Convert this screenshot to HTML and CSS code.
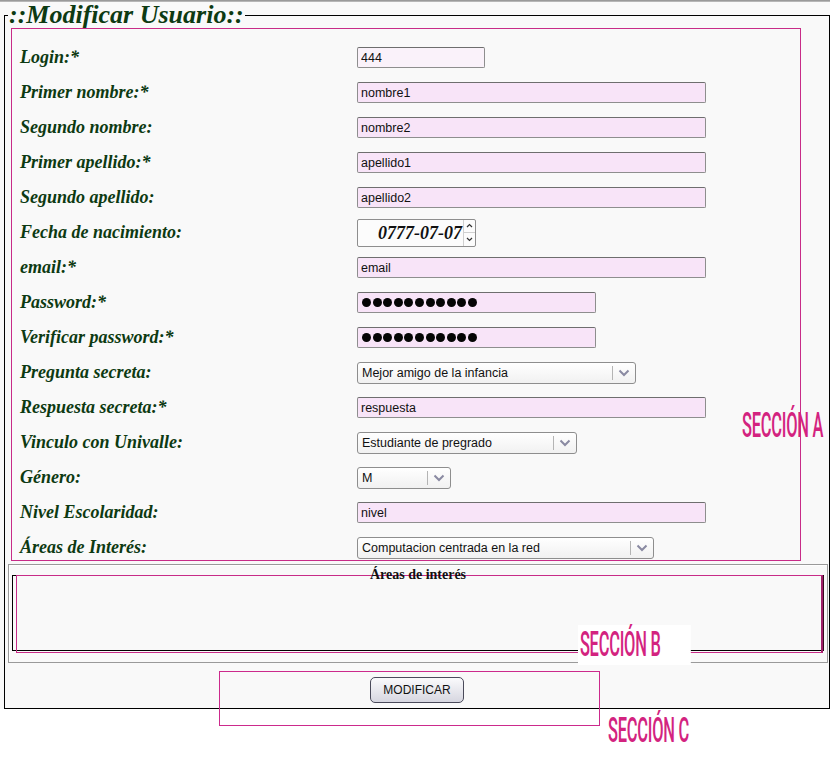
FILE: index.html
```html
<!DOCTYPE html>
<html lang="es">
<head>
<meta charset="utf-8">
<title>Modificar Usuario</title>
<link rel="stylesheet" href="styles.css">
</head>
<body>
<div class="topbar"></div>
<div class="page">
  <fieldset class="main">
    <legend class="title">::Modificar Usuario::</legend>
    <div class="secA">
      <div class="row"><span class="lbl">Login:*</span><input class="txt login" value="444"></div>
      <div class="row"><span class="lbl">Primer nombre:*</span><input class="txt wide" value="nombre1"></div>
      <div class="row"><span class="lbl">Segundo nombre:</span><input class="txt wide" value="nombre2"></div>
      <div class="row"><span class="lbl">Primer apellido:*</span><input class="txt wide" value="apellido1"></div>
      <div class="row"><span class="lbl">Segundo apellido:</span><input class="txt wide" value="apellido2"></div>
      <div class="row"><span class="lbl">Fecha de nacimiento:</span>
        <div class="date"><span class="dval">0777-07-07</span>
          <span class="spin">
            <span class="sp"><svg width="7" height="5" viewBox="0 0 7 5"><path d="M1 4 L3.5 1.5 L6 4" fill="none" stroke="#333" stroke-width="1.2"/></svg></span>
            <span class="sp sp2"><svg width="7" height="5" viewBox="0 0 7 5"><path d="M1 1 L3.5 3.5 L6 1" fill="none" stroke="#333" stroke-width="1.2"/></svg></span>
          </span>
        </div>
      </div>
      <div class="row"><span class="lbl">email:*</span><input class="txt wide" value="email"></div>
      <div class="row"><span class="lbl">Password:*</span>
        <div class="txt pw"><span class="dot"></span><span class="dot"></span><span class="dot"></span><span class="dot"></span><span class="dot"></span><span class="dot"></span><span class="dot"></span><span class="dot"></span><span class="dot"></span><span class="dot"></span><span class="dot"></span></div>
      </div>
      <div class="row"><span class="lbl">Verificar password:*</span>
        <div class="txt pw"><span class="dot"></span><span class="dot"></span><span class="dot"></span><span class="dot"></span><span class="dot"></span><span class="dot"></span><span class="dot"></span><span class="dot"></span><span class="dot"></span><span class="dot"></span><span class="dot"></span></div>
      </div>
      <div class="row"><span class="lbl">Pregunta secreta:</span>
        <div class="sel s-preg"><span class="sv">Mejor amigo de la infancia</span><span class="arr"><svg width="12" height="8" viewBox="0 0 12 8"><path d="M1.5 1.5 L6 6 L10.5 1.5" fill="none" stroke="#8a8aa2" stroke-width="2"/></svg></span></div>
      </div>
      <div class="row"><span class="lbl">Respuesta secreta:*</span><input class="txt wide" value="respuesta"></div>
      <div class="row"><span class="lbl">Vinculo con Univalle:</span>
        <div class="sel s-vinc"><span class="sv">Estudiante de pregrado</span><span class="arr"><svg width="12" height="8" viewBox="0 0 12 8"><path d="M1.5 1.5 L6 6 L10.5 1.5" fill="none" stroke="#8a8aa2" stroke-width="2"/></svg></span></div>
      </div>
      <div class="row"><span class="lbl">Género:</span>
        <div class="sel s-gen"><span class="sv">M</span><span class="arr"><svg width="12" height="8" viewBox="0 0 12 8"><path d="M1.5 1.5 L6 6 L10.5 1.5" fill="none" stroke="#8a8aa2" stroke-width="2"/></svg></span></div>
      </div>
      <div class="row"><span class="lbl">Nivel Escolaridad:</span><input class="txt wide" value="nivel"></div>
      <div class="row"><span class="lbl">Áreas de Interés:</span>
        <div class="sel s-area"><span class="sv">Computacion centrada en la red</span><span class="arr"><svg width="12" height="8" viewBox="0 0 12 8"><path d="M1.5 1.5 L6 6 L10.5 1.5" fill="none" stroke="#8a8aa2" stroke-width="2"/></svg></span></div>
      </div>
    </div>
    <div class="secB">
      <fieldset class="areas">
        <legend class="areasTitle">Áreas de interés</legend>
        <div class="areasBox"></div>
      </fieldset>
    </div>
    <div class="secC">
      <button class="btn" type="button">MODIFICAR</button>
      <div class="markC"></div>
    </div>
  </fieldset>
</div>
<div class="tag tagA">SECCIÓN A</div>
<div class="tag tagB">SECCIÓN B</div>
<div class="tag tagC">SECCIÓN C</div>
</body>
</html>
```
FILE: styles.css
```css
html, body {
  margin: 0;
  padding: 0;
}
body {
  background: #ffffff;
  position: relative;
  width: 830px;
  height: 757px;
  overflow: hidden;
  font-family: "Liberation Sans", Arial, sans-serif;
}
.topbar {
  height: 2px;
  background: linear-gradient(#8c8c8c, #c4c4c4);
}
.page {
  background: #f9f9f9;
}
.main {
  margin: 0 0 0 4px;
  padding: 0;
  border: 1px solid #000;
  min-width: 0;
}
.title {
  margin-left: 3px;
  padding: 0 1px;
  font-family: "Liberation Serif", "Times New Roman", serif;
  font-style: italic;
  font-weight: bold;
  font-size: 26px;
  line-height: 26px;
  color: #0d3a12;
}
.secA {
  margin-left: 6px;
  width: 790px;
  height: 533px;
  box-sizing: border-box;
  border: 1px solid #c82c88;
  padding: 11px 0 0 8px;
}
.row {
  display: grid;
  grid-template-columns: 337px auto;
  align-items: center;
  justify-items: start;
  height: 35px;
}
.lbl {
  font-family: "Liberation Serif", "Times New Roman", serif;
  font-style: italic;
  font-weight: bold;
  font-size: 18px;
  color: #0d3a12;
}
.txt {
  box-sizing: border-box;
  height: 21px;
  border: 1px solid #8e8e8e;
  border-top-color: #6e6e6e;
  border-radius: 2px;
  background: #f8e4f8;
  padding: 0 0 0 3px;
  font-family: "Liberation Sans", Arial, sans-serif;
  font-size: 12.5px;
  color: #111;
  outline: none;
}
.login {
  width: 128px;
  background: #faf2fa;
}
.wide {
  width: 349px;
}
.pw {
  width: 239px;
  display: flex;
  align-items: center;
  gap: 1.6px;
  padding-left: 4px;
}
.dot {
  width: 9px;
  height: 9px;
  border-radius: 50%;
  background: #050505;
}
.date {
  box-sizing: border-box;
  width: 119px;
  height: 28px;
  border: 1px solid #8e8e8e;
  border-radius: 2px;
  background: #fcfcfc;
  display: flex;
  align-items: stretch;
}
.dval {
  flex: 1;
  text-align: right;
  font-family: "Liberation Serif", "Times New Roman", serif;
  font-style: italic;
  font-weight: bold;
  font-size: 18px;
  line-height: 26px;
  color: #111;
  padding-right: 1px;
}
.spin {
  width: 11px;
  display: flex;
  flex-direction: column;
  border-left: 1px solid #d0d0d0;
}
.sp {
  flex: 1;
  display: flex;
  align-items: center;
  justify-content: center;
}
.sp2 {
  border-top: 1px solid #d0d0d0;
}
.sel {
  box-sizing: border-box;
  height: 22px;
  border: 1px solid #8e8e8e;
  border-radius: 3px;
  background: linear-gradient(#ffffff, #f1f1f1);
  display: flex;
  align-items: center;
  font-size: 12.5px;
  color: #111;
}
.sv {
  flex: 1;
  padding-left: 4px;
  white-space: nowrap;
  overflow: hidden;
}
.arr {
  width: 22px;
  height: 14px;
  border-left: 1px solid #b4b4b4;
  display: flex;
  align-items: center;
  justify-content: center;
}
.s-preg { width: 279px; }
.s-vinc { width: 220px; }
.s-gen { width: 94px; }
.s-area { width: 297px; }

.secB {
  margin: 3px 0 0 3px;
  width: 820px;
  height: 99px;
  box-sizing: border-box;
  border: 1px solid #9a9a9a;
  box-shadow: inset 1px 1px 0 #ffffff;
  padding: 2px 3px 0 3px;
}
.areas {
  margin: 0;
  padding: 0;
  border: 1px solid #000;
  border-right-color: #3a0a20;
  height: 84px;
  box-sizing: border-box;
  min-width: 0;
}
.areasTitle {
  margin: 0 auto;
  padding: 0 2px;
  font-family: "Liberation Serif", "Times New Roman", serif;
  font-weight: bold;
  font-size: 14px;
  line-height: 16px;
  color: #111;
}
.areasBox {
  margin: -8px 0 0 3px;
  height: 78px;
  box-sizing: border-box;
  border: 1px solid #c82c88;
  border-right: 2px solid #a0206a;
}
.secC {
  position: relative;
  display: flex;
  justify-content: center;
  padding: 14px 0 5px 0;
}
.btn {
  width: 94px;
  height: 26px;
  border: 1px solid #4a4a5a;
  border-radius: 5px;
  background: linear-gradient(#fafafc, #d6d6e0);
  font-family: "Liberation Sans", Arial, sans-serif;
  font-size: 12px;
  color: #111;
  padding: 0;
}
.markC {
  position: absolute;
  left: 214px;
  top: 8px;
  width: 381px;
  height: 55px;
  border: 1px solid #cc2a8c;
  box-sizing: border-box;
}
.tag {
  position: absolute;
  font-family: Roboto, "Liberation Sans", sans-serif;
  font-weight: 500;
  font-size: 35px;
  line-height: 35px;
  color: #d3237f;
  transform-origin: 0 0;
  transform: scaleX(0.47);
  white-space: nowrap;
  letter-spacing: -0.5px;
}
.tagA {
  left: 742px;
  top: 408px;
}
.tagB {
  left: 578px;
  top: 625px;
  background: #ffffff;
  padding: 2px 0 3px 4px;
  width: 236px;
}
.tagC {
  left: 608px;
  top: 713px;
}
```
